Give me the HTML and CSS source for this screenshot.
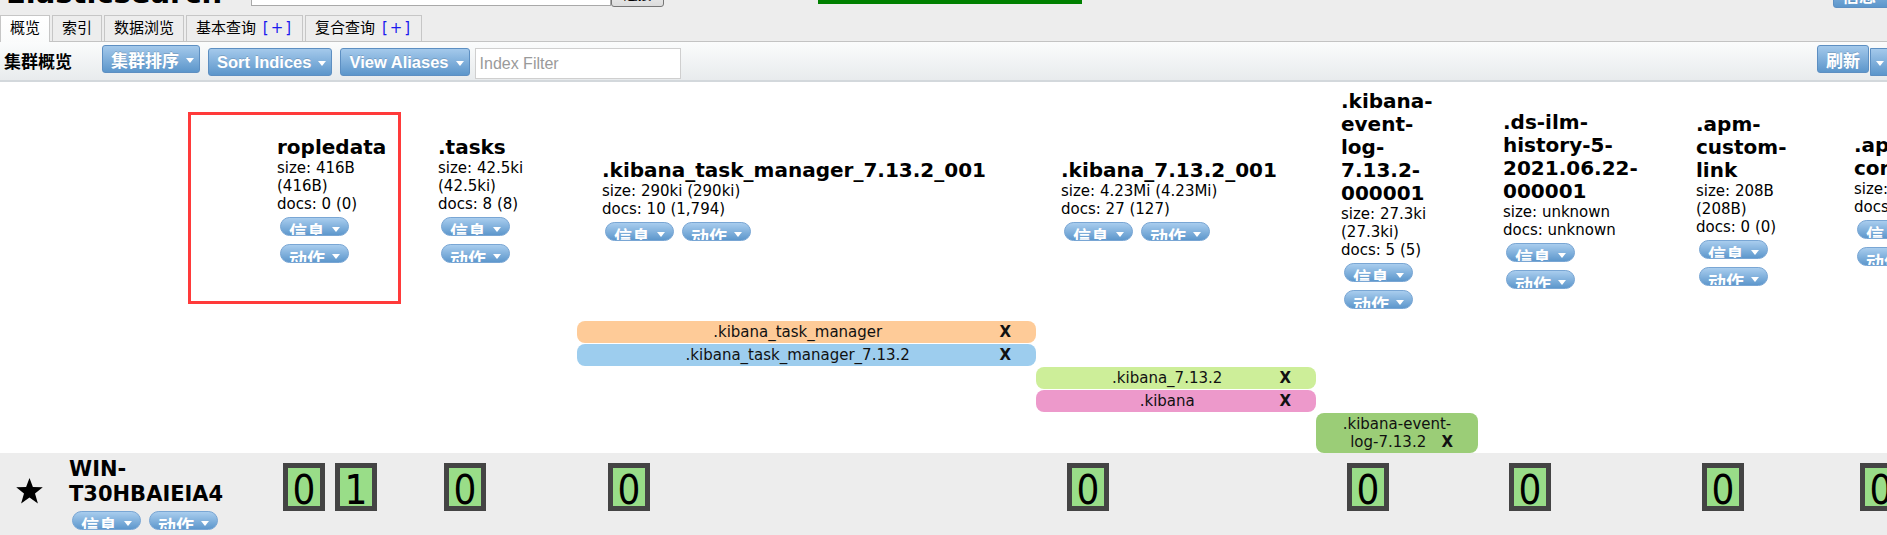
FILE: index.html
```html
<!DOCTYPE html>
<html lang="zh-CN">
<head>
<meta charset="utf-8">
<title>Elasticsearch</title>
<link rel="stylesheet" href="styles.css">
</head>
<body>
<header class="header">
  <div class="topbar">
    <h1 class="brand">Elasticsearch</h1>
    <div class="conn">
      <input class="conn-input" type="text" value="http://localhost:9200/">
      <button class="conn-btn">连接</button>
    </div>
    <span class="health">集群健康值: green (19 of 19)</span>
    <span class="tbtn top-info"><span class="tlabel cjk">信息</span><i class="caret"></i></span>
  </div>
  <nav class="tabs">
    <span class="tab active">概览</span>
    <span class="tab">索引</span>
    <span class="tab">数据浏览</span>
    <span class="tab">基本查询 <span class="plus">[+]</span></span>
    <span class="tab">复合查询 <span class="plus">[+]</span></span>
  </nav>
</header>

<div class="toolbar">
  <span class="toolbar-title">集群概览</span>
  <span class="tbtn tbtn-high"><span class="tlabel cjk">集群排序</span><i class="caret"></i></span>
  <span class="tbtn"><span class="tlabel">Sort Indices</span><i class="caret"></i></span>
  <span class="tbtn tbtn-last"><span class="tlabel">View Aliases</span><i class="caret"></i></span>
  <input class="filter" type="text" placeholder="Index Filter">
  <span class="tbtn tbtn-high refresh"><span class="tlabel cjk">刷新</span></span>
  <span class="tbtn tbtn-split"><i class="caret"></i></span>
</div>

<main class="overview">
  <table class="cluster">
    <colgroup>
      <col class="col-node">
      <col class="col-ropledata">
      <col class="col-tasks">
      <col class="col-tm">
      <col class="col-kibana">
      <col class="col-event">
      <col class="col-ilm">
      <col class="col-apm">
      <col class="col-last">
    </colgroup>
    <tbody>
      <tr class="row-indices">
        <td></td>
        <td class="idx">
          <h3 class="idx-name">ropledata</h3>
          <div class="idx-stat">size: 416B (416B)</div>
          <div class="idx-stat">docs: 0 (0)</div>
          <div class="pills"><span class="pill"><span class="plabel">信息</span><i class="caret"></i></span><span class="pill"><span class="plabel">动作</span><i class="caret"></i></span></div>
        </td>
        <td class="idx">
          <h3 class="idx-name">.tasks</h3>
          <div class="idx-stat">size: 42.5ki (42.5ki)</div>
          <div class="idx-stat">docs: 8 (8)</div>
          <div class="pills"><span class="pill"><span class="plabel">信息</span><i class="caret"></i></span><span class="pill"><span class="plabel">动作</span><i class="caret"></i></span></div>
        </td>
        <td class="idx">
          <h3 class="idx-name">.kibana_task_manager_7.13.2_001</h3>
          <div class="idx-stat">size: 290ki (290ki)</div>
          <div class="idx-stat">docs: 10 (1,794)</div>
          <div class="pills"><span class="pill"><span class="plabel">信息</span><i class="caret"></i></span><span class="pill"><span class="plabel">动作</span><i class="caret"></i></span></div>
        </td>
        <td class="idx">
          <h3 class="idx-name">.kibana_7.13.2_001</h3>
          <div class="idx-stat">size: 4.23Mi (4.23Mi)</div>
          <div class="idx-stat">docs: 27 (127)</div>
          <div class="pills"><span class="pill"><span class="plabel">信息</span><i class="caret"></i></span><span class="pill"><span class="plabel">动作</span><i class="caret"></i></span></div>
        </td>
        <td class="idx">
          <h3 class="idx-name">.kibana-event-log-7.13.2-000001</h3>
          <div class="idx-stat">size: 27.3ki (27.3ki)</div>
          <div class="idx-stat">docs: 5 (5)</div>
          <div class="pills"><span class="pill"><span class="plabel">信息</span><i class="caret"></i></span><span class="pill"><span class="plabel">动作</span><i class="caret"></i></span></div>
        </td>
        <td class="idx">
          <h3 class="idx-name">.ds-ilm-history-5-2021.06.22-000001</h3>
          <div class="idx-stat">size: unknown</div>
          <div class="idx-stat">docs: unknown</div>
          <div class="pills"><span class="pill"><span class="plabel">信息</span><i class="caret"></i></span><span class="pill"><span class="plabel">动作</span><i class="caret"></i></span></div>
        </td>
        <td class="idx">
          <h3 class="idx-name">.apm-custom-link</h3>
          <div class="idx-stat">size: 208B (208B)</div>
          <div class="idx-stat">docs: 0 (0)</div>
          <div class="pills"><span class="pill"><span class="plabel">信息</span><i class="caret"></i></span><span class="pill"><span class="plabel">动作</span><i class="caret"></i></span></div>
        </td>
        <td class="idx">
          <h3 class="idx-name">.apm-agent-configuration</h3>
          <div class="idx-stat">size: 208B (208B)</div>
          <div class="idx-stat">docs: 0 (0)</div>
          <div class="pills"><span class="pill"><span class="plabel">信息</span><i class="caret"></i></span><span class="pill"><span class="plabel">动作</span><i class="caret"></i></span></div>
        </td>
      </tr>

      <tr class="row-alias">
        <td colspan="3"></td>
        <td><div class="alias alias-orange">.kibana_task_manager<span class="alias-x">X</span></div></td>
        <td colspan="5"></td>
      </tr>
      <tr class="row-alias">
        <td colspan="3"></td>
        <td><div class="alias alias-blue">.kibana_task_manager_7.13.2<span class="alias-x">X</span></div></td>
        <td colspan="5"></td>
      </tr>
      <tr class="row-alias">
        <td colspan="4"></td>
        <td><div class="alias alias-lime">.kibana_7.13.2<span class="alias-x">X</span></div></td>
        <td colspan="4"></td>
      </tr>
      <tr class="row-alias">
        <td colspan="4"></td>
        <td><div class="alias alias-pink">.kibana<span class="alias-x">X</span></div></td>
        <td colspan="4"></td>
      </tr>
      <tr class="row-alias">
        <td colspan="5"></td>
        <td><div class="alias alias-green alias-last">.kibana-event-log-7.13.2<span class="alias-x">X</span></div></td>
        <td colspan="3"></td>
      </tr>

      <tr class="row-node">
        <td class="node-cell">
          <div class="node">
            <svg class="star" viewBox="0 0 27 26" width="27" height="26" aria-hidden="true">
              <polygon points="13.5,0 16.9,9 26.8,9.3 19,15.4 21.9,25.5 13.5,19.6 5.1,25.5 8,15.4 0.2,9.3 10.1,9" fill="#000"/>
            </svg>
            <div class="node-info">
              <div class="node-name">WIN-T30HBAIEIA4</div>
              <div class="pills"><span class="pill"><span class="plabel">信息</span><i class="caret"></i></span><span class="pill"><span class="plabel">动作</span><i class="caret"></i></span></div>
            </div>
          </div>
        </td>
        <td class="shards"><span class="shard">0</span><span class="shard">1</span></td>
        <td class="shards"><span class="shard">0</span></td>
        <td class="shards"><span class="shard">0</span></td>
        <td class="shards"><span class="shard">0</span></td>
        <td class="shards"><span class="shard">0</span></td>
        <td class="shards"><span class="shard">0</span></td>
        <td class="shards"><span class="shard">0</span></td>
        <td class="shards"><span class="shard">0</span></td>
      </tr>
    </tbody>
  </table>
  <div class="annot"></div>
</main>
</body>
</html>
```

FILE: styles.css
```css
* { box-sizing: border-box; }

html, body {
  margin: 0;
  padding: 0;
  overflow: hidden;
}

body {
  width: 1887px;
  height: 535px;
  background: #fff;
  color: #000;
  font-family: "DejaVu Sans", Verdana, "Noto Sans CJK SC", sans-serif;
}

/* ---------- header ---------- */
.header {
  display: flow-root;
  background: #ededed;
  height: 41px;
}

.topbar {
  display: flex;
  align-items: flex-end;
  height: 41px;
  margin-top: -26px;
  padding: 0 0 7px 6px;
}

.brand {
  margin: 0;
  font: bold 29px/29px "DejaVu Sans", sans-serif;
  white-space: nowrap;
}

.conn {
  display: flex;
  align-items: flex-end;
  margin-left: 29px;
}

.conn-input {
  width: 360px;
  height: 30px;
  margin: 0 0 2px;
  padding: 0 4px;
  border: 1px solid #a9a9a9;
  font: 14px "Liberation Sans", sans-serif;
  background: #fff;
}

.conn-btn {
  width: 53px;
  height: 28px;
  margin: 0 0 1px;
  border: 1px solid #767676;
  border-radius: 3px;
  background: linear-gradient(#fdfdfd, #dcdcdc);
  font: 14px "Noto Sans CJK SC", sans-serif;
}

.health {
  width: 264px;
  height: 24px;
  margin: 0 0 4px 154px;
  padding-left: 30px;
  background: #008000;
  color: #000;
  font: 14px/24px "DejaVu Sans", "Noto Sans CJK SC", sans-serif;
  white-space: nowrap;
  overflow: hidden;
}

.tabs {
  display: flex;
  align-items: flex-end;
  height: 26px;
}

.tab {
  height: 26px;
  margin-right: 2px;
  padding: 0 9px;
  border: 1px solid #c6c6c6;
  border-bottom: none;
  background: #ededed;
  font: 15px/25px "DejaVu Sans", "Noto Sans CJK SC", sans-serif;
  white-space: nowrap;
}

.tab.active {
  position: relative;
  z-index: 1;
  height: 27px;
  margin-bottom: -1px;
  background: linear-gradient(#ffffff, #fafbfb);
}

.plus {
  margin-left: 2px;
  letter-spacing: 2px;
  color: #1a1aee;
}

/* ---------- toolbar ---------- */
.toolbar {
  display: flex;
  align-items: flex-start;
  height: 41px;
  padding-left: 4px;
  border-top: 1px solid #c3c3c3;
  border-bottom: 2px solid #d3d8dc;
  background: linear-gradient(#fbfcfc, #e8ebed);
}

.toolbar-title {
  align-self: center;
  margin-right: 30px;
  font: bold 17px/20px "Noto Sans CJK SC", sans-serif;
}

.tbtn {
  display: flex;
  align-items: flex-start;
  height: 28px;
  margin: 6px 8px 0 0;
  padding: 0 5px 0 8px;
  border: 1px solid #5d8fc2;
  border-radius: 3px;
  background: linear-gradient(#a4c9eb, #5c96cb);
  color: #fff;
  white-space: nowrap;
  flex-shrink: 0;
}

.tbtn-high { margin-top: 3px; }
.tbtn-last { margin-right: 5px; }

.tlabel {
  font: bold 16.5px/26px "Liberation Sans", Arial, sans-serif;
  text-shadow: 0 -1px 0 rgba(0, 0, 0, 0.15);
}

.tlabel.cjk {
  margin-top: 6px;
  font: bold 17px/16px "Noto Sans CJK SC", sans-serif;
}

.tbtn .caret { margin: 12px 0 0 7px; }

.header .top-info {
  margin: 0 -10px 0 auto;
}

.filter {
  width: 206px;
  height: 31px;
  margin-top: 6px;
  padding: 0 4px;
  border: 1px solid #cfcfcf;
  background: #fff;
  font: 16px "Liberation Sans", Arial, sans-serif;
}

.filter::placeholder { color: #9a9a9a; }

.refresh {
  margin-left: auto;
  margin-right: 1px;
  padding: 0 8px;
}

.tbtn-split {
  width: 22px;
  margin-right: -5px;
  padding: 0 0 0 5px;
  border-radius: 0 3px 3px 0;
}

.tbtn-split .caret { margin-left: 0; }

.caret {
  display: inline-block;
  width: 0;
  height: 0;
  border-left: 4px solid transparent;
  border-right: 4px solid transparent;
  border-top: 5px solid #fff;
  flex-shrink: 0;
}

/* ---------- overview ---------- */
.overview {
  position: relative;
}

.cluster {
  width: 2029px;
  table-layout: fixed;
  border-collapse: collapse;
  border-spacing: 0;
}

.cluster td { padding: 0; }

.col-node { width: 252px; }
.col-ropledata { width: 161px; }
.col-tasks { width: 164px; }
.col-tm { width: 459px; }
.col-kibana { width: 280px; }
.col-event { width: 162px; }
.col-ilm { width: 193px; }
.col-apm { width: 158px; }
.col-last { width: 200px; }

.row-indices { height: 239px; }

.cluster td.idx {
  padding: 0 25px;
  vertical-align: middle;
}

.idx-name {
  margin: 0;
  font: bold 20px/23px "DejaVu Sans", Verdana, sans-serif;
}

.idx-stat {
  font: 15px/18px "DejaVu Sans", Verdana, sans-serif;
}

.pills {
  font-size: 0;
  line-height: 0;
}

.pill {
  display: inline-flex;
  align-items: flex-start;
  vertical-align: top;
  width: 69px;
  height: 19px;
  margin: 4px 5px 4px 3px;
  padding: 0 0 0 8px;
  border: 1px solid #79a6d4;
  border-radius: 10px;
  background: linear-gradient(#a9cdee, #5d97cc);
  color: #fff;
  overflow: hidden;
  white-space: nowrap;
}

.plabel {
  margin-top: 4px;
  font: bold 18px/18px "Noto Sans CJK SC", sans-serif;
}

.pill .caret { margin: 9px 0 0 7px; }

/* aliases */
.cluster .row-alias td { vertical-align: top; }

.alias {
  margin-bottom: 1px;
  padding: 2px 25px;
  border-radius: 8px;
  text-align: center;
  font: 15px/18px "DejaVu Sans", Verdana, sans-serif;
  color: #111;
}

.alias-last { margin-bottom: 0; }

.alias-x {
  float: right;
  margin-left: 6px;
  font-weight: bold;
}

.alias-orange { background: #fecb98; }
.alias-blue { background: #9dcdee; }
.alias-lime { background: #cdee99; }
.alias-pink { background: #ed99cb; }
.alias-green { background: #9bcd77; }

/* node row */
.row-node td {
  height: 90px;
  background: #ededed;
  vertical-align: top;
}

.cluster td.node-cell { padding: 4px 0 0 16px; }

.node {
  display: flex;
  align-items: flex-start;
}

.star {
  flex-shrink: 0;
  margin: 21px 26px 0 0;
}

.node-info { min-width: 0; flex: 1; }

.node-name {
  font: bold 21px/25px "DejaVu Sans", Verdana, sans-serif;
}

.cluster td.shards { padding: 10px 0 0 25px; }

.shard {
  display: inline-block;
  vertical-align: top;
  width: 42px;
  height: 48px;
  margin: 0 4px 0 6px;
  border: 5px solid #444;
  background: #99dd88;
  overflow: hidden;
  text-align: center;
  font: 40px/44px "DejaVu Sans Condensed", "DejaVu Sans", sans-serif;
  font-stretch: condensed;
}

.annot {
  position: absolute;
  left: 188px;
  top: 30px;
  width: 213px;
  height: 192px;
  border: 3px solid #ff3a3a;
  pointer-events: none;
}
```
